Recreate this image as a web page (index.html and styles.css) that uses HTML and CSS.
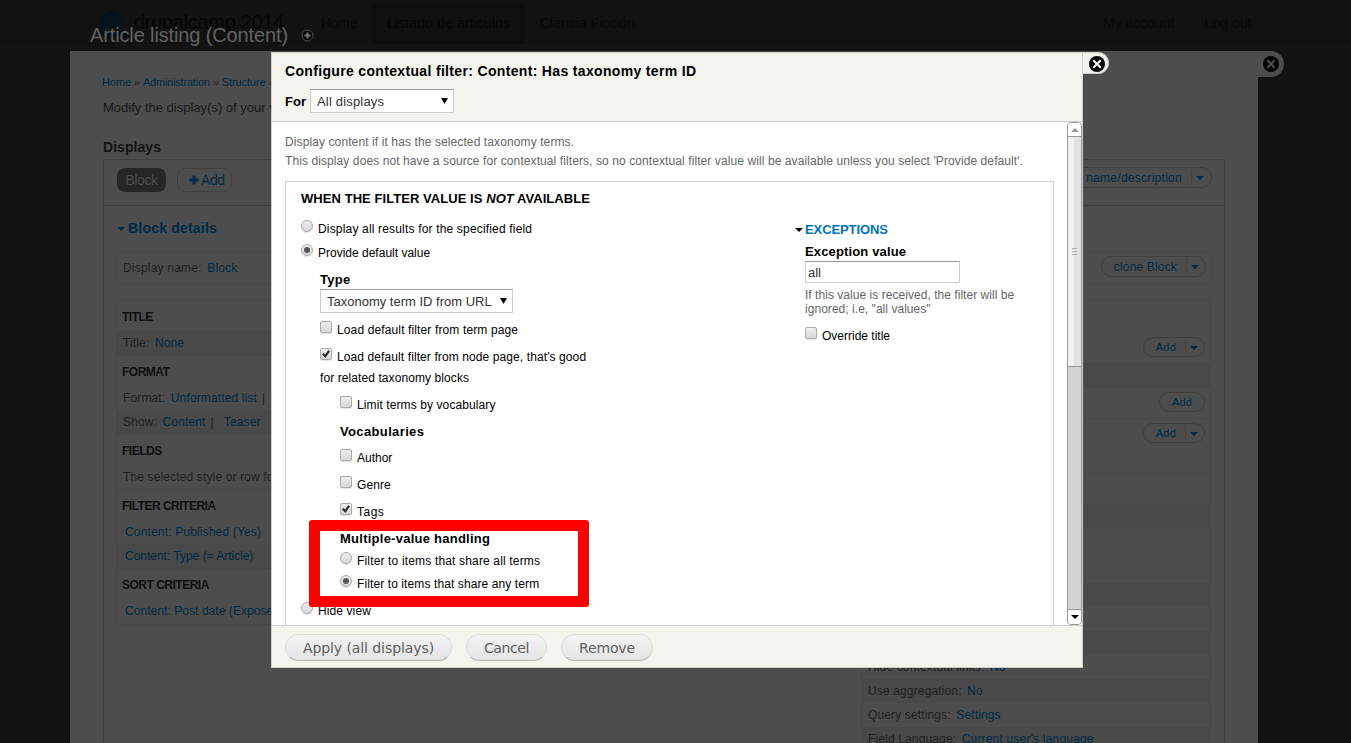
FILE: index.html
```
<!DOCTYPE html>
<html lang="en">
<head>
<meta charset="utf-8">
<title>Article listing (Content)</title>
<link rel="stylesheet" href="styles.css">
</head>
<body>
<header class="site">
  <svg class="site-logo" viewBox="0 0 26 30" width="26" height="30"><path d="M12.500 1C14 5 25.500 8 25.500 18.500C25.500 25 20 29.500 13 29.500C6 29.500.500 25 .500 18.500C.500 8 11 6 12.500 1Z" fill="#03121c"/><path d="M5 21C6 17 10 17.500 14 20C18 16 22 17 22 21C22 25 18 24 14 22C9 26 5 25 5 21Z" fill="#101518"/></svg>
  <span class="site-name">drupalcamp 2014</span>
  <nav class="site-nav">
    <a class="nav-home">Home</a>
    <a class="nav-active">Listado de articulos</a>
    <a class="nav-last">Ciencia Ficción</a>
  </nav>
  <div class="site-user"><a>My account</a><a>Log out</a></div>
</header>

<div class="overlay">
  <div class="overlay-title">
    <h1>Article listing (Content)</h1>
    <svg width="13" height="13" viewBox="0 0 13 13"><circle cx="6.500" cy="6.500" r="5.500" fill="#000" stroke="#555"/><path d="M6.500 3.500v6M3.500 6.500h6" stroke="#777" stroke-width="2"/></svg>
  </div>
  <main class="page">
    <div class="page-close"><svg width="16" height="16" viewBox="0 0 16 16"><circle cx="8" cy="8" r="8"/><path d="M4.300 4.300l7.400 7.400M11.700 4.300l-7.400 7.400" stroke="#4d4d4d" stroke-width="2"/></svg></div>
    <div class="crumbs"><a>Home</a> » <a class="crumb-admin">Administration</a> » <a>Structure</a> » <a>Views</a></div>
    <p class="intro">Modify the display(s) of your view.</p>
    <h2 class="displays-title">Displays</h2>
    <section class="panel">
      <div class="panel-tabs">
        <span class="tab tab-on">Block</span>
        <span class="tab tab-add"><svg width="10" height="10" viewBox="0 0 10 10"><path d="M5 .500v9M.500 5h9" stroke="#002b48" stroke-width="3"/></svg>Add</span>
        <span class="pill pill-name"><span>edit view name/description</span><i class="drop"></i></span>
      </div>
      <h3 class="details-title"><i class="tri"></i>Block details</h3>
      <div class="name-row">
        <p>Display name: <a>Block</a></p>
        <span class="pill pill-clone"><span>clone Block</span><i class="drop"></i></span>
      </div>
      <div class="cols">
        <div class="col">
          <h4>TITLE</h4>
          <p class="row tall odd">Title: <a>None</a></p>
          <h4>FORMAT</h4>
          <p class="row format">Format: <a>Unformatted list</a><b>|</b><a>Settings</a></p>
          <p class="row tall odd">Show: <a>Content</a><b>|</b><a class="teaser">Teaser</a></p>
          <h4>FIELDS</h4>
          <p class="row tall">The selected style or row format does not use fields.</p>
          <h4 class="ruled">FILTER CRITERIA</h4>
          <p class="row crit pub"><a>Content: Published (Yes)</a></p>
          <p class="row crit tall odd"><a>Content: Type (= Article)</a></p>
          <h4 class="ruled">SORT CRITERIA</h4>
          <p class="row crit tall post"><a>Content: Post date (Exposed)</a></p>
        </div>
        <div class="col col-right">
          <div class="slot slot-first"><span class="pill pill-add"><span>Add</span><i class="drop"></i></span></div>
          <div class="row odd"></div>
          <div class="slot"><span class="pill pill-add solo"><span>Add</span></span></div>
          <div class="slot slot-filter"><span class="pill pill-add"><span>Add</span><i class="drop"></i></span></div>
          <div class="slot"></div>
          <div class="row odd"></div>
          <div class="slot slot-other"></div>
          <div class="row odd"></div>
          <div class="row"></div>
          <div class="row odd"></div>
          <p class="row">Hide contextual links: <a>No</a></p>
          <p class="row odd aggr">Use aggregation: <a>No</a></p>
          <p class="row">Query settings: <a>Settings</a></p>
          <p class="row odd lang">Field Language: <a>Current user's language</a></p>
        </div>
      </div>
    </section>
  </main>
</div>

<div class="modal">
  <div class="modal-close"><svg width="16" height="16" viewBox="0 0 16 16"><circle cx="8" cy="8" r="8"/><path d="M4.300 4.300l7.400 7.400M11.700 4.300l-7.400 7.400" stroke="#fff" stroke-width="2"/></svg></div>
  <div class="modal-head">
    <h2>Configure contextual filter: Content: Has taxonomy term ID</h2>
    <div class="for"><strong>For</strong><span class="select select-for">All displays<i class="arrow"></i></span></div>
  </div>
  <div class="modal-body">
    <div class="scroll">
      <p class="help">Display content if it has the selected taxonomy terms.</p>
      <p class="help help-2">This display does not have a source for contextual filters, so no contextual filter value will be available unless you select 'Provide default'.</p>
      <section class="fieldset">
        <h3>WHEN THE FILTER VALUE IS <em>NOT</em> AVAILABLE</h3>
        <div class="fs-cols">
          <div class="opts">
            <label class="opt wide"><i class="radio"></i>Display all results for the specified field</label>
            <label class="opt plain"><i class="radio on"></i>Provide default value</label>
            <div class="sub">
              <h4>Type</h4>
              <span class="select select-type">Taxonomy term ID from URL<i class="arrow"></i></span>
              <label class="opt term"><i class="check"></i>Load default filter from term page</label>
              <label class="opt two"><i class="check on"></i>Load default filter from node page, that's good</label>
              <div class="cont">for related taxonomy blocks</div>
              <div class="sub2">
                <label class="opt first"><i class="check"></i>Limit terms by vocabulary</label>
                <h4 class="voc">Vocabularies</h4>
                <label class="opt plain"><i class="check"></i>Author</label>
                <label class="opt gap"><i class="check"></i>Genre</label>
                <label class="opt gap tags"><i class="check on"></i>Tags</label>
                <h4 class="multi">Multiple-value handling</h4>
                <label class="opt near all"><i class="radio"></i>Filter to items that share all terms</label>
                <label class="opt near"><i class="radio on"></i>Filter to items that share any term</label>
              </div>
            </div>
            <label class="opt hide-view"><i class="radio"></i>Hide view</label>
          </div>
          <div class="exceptions">
            <h3><i class="tri"></i>EXCEPTIONS</h3>
            <h4>Exception value</h4>
            <div class="input">all</div>
            <p>If this value is received, the filter will be<br>ignored; i.e, "all values"</p>
            <label class="opt plain"><i class="check"></i>Override title</label>
          </div>
        </div>
      </section>
    </div>
    <div class="bar">
      <div class="bar-btn up"><i></i></div>
      <div class="thumb"><i></i><i></i><i></i></div>
      <div class="track"></div>
      <div class="bar-btn down"><i></i></div>
    </div>
  </div>
  <div class="modal-foot">
    <span class="btn apply">Apply (all displays)</span>
    <span class="btn cancel">Cancel</span>
    <span class="btn remove">Remove</span>
  </div>
  <div class="highlight"></div>
</div>
</body>
</html>
```
FILE: styles.css
```
* { box-sizing: border-box; }
body {
  margin: 0;
  height: 743px;
  overflow: hidden;
  position: relative;
  background: #131313;
  font: 12px/24px "Liberation Sans", Arial, sans-serif;
  color: #1f1f1f;
}
h1, h2, h3, h4, p { margin: 0; font-size: inherit; font-weight: bold; }
p { font-weight: normal; }
a { color: #002a46; }
i { font-style: normal; display: block; flex: none; }

/* Site header behind the overlay */
.site {
  height: 44px;
  display: flex;
  padding-left: 98px;
  color: #070707;
  background: #121212;
  border-bottom: 1px solid #0f0f0f;
  font-size: 14px;
  line-height: 46px;
}
.site a { color: #090909; }
.site-logo { margin-top: 8px; flex: none; }
.site-name { width: 197px; margin-left: 10px; font-size: 20px; line-height: 45px; letter-spacing: -.3px; color: #060606; flex: none; }
.site-nav { display: flex; width: 772px; flex: none; }
.nav-home { width: 51px; margin-left: -10px; letter-spacing: -.3px; }
.site-nav .nav-active { width: 153px; margin-top: 3px; padding-left: 15px; background: #0f0f0f; color: #050505; line-height: 40px; letter-spacing: .12px; }
.nav-last { margin-left: 15px; }
.site-user { display: flex; gap: 30px; }

/* Administrative overlay */
.overlay { position: absolute; inset: 0; padding-left: 70px; }
.overlay-title { height: 51px; padding: 23px 0 0 20px; display: flex; gap: 14px; }
.overlay-title h1 { font-size: 20px; font-weight: normal; line-height: 24px; letter-spacing: -.13px; color: #626262; }
.overlay-title svg { margin-top: 6px; margin-left: -1px; }
.page { position: relative; width: 1188px; height: 692px; padding: 21px 33px 0; background: #4d4d4d; }
.page-close { position: absolute; left: 1188px; top: 0; width: 26px; height: 26px; background: #4d4d4d; border-radius: 0 13px 13px 0; }
.page-close svg { position: absolute; left: 5px; top: 5px; }
.crumbs { height: 21px; line-height: 21px; font-size: 11px; letter-spacing: -.1px; margin-left: -1px; }
.crumb-admin { letter-spacing: -.2px; }
.intro { height: 30px; line-height: 30px; font-size: 13px; color: #181818; }
.displays-title { height: 36px; line-height: 48px; font-size: 14px; letter-spacing: .05px; color: #131313; }
.panel { height: 600px; border: 1px solid #3f3f3f; border-bottom: 0; }
.panel-tabs { height: 46px; display: flex; align-items: flex-start; border-bottom: 1px solid #3f3f3f; padding: 8px 12px 0 13px; }
.tab { height: 24px; line-height: 22px; font-size: 14px; border-radius: 8px; letter-spacing: -.4px; }
.tab-on { width: 49px; background: #262626; color: #4d4d4d; text-align: center; line-height: 24px; }
.tab-add { width: 55px; margin-left: 11px; display: flex; align-items: center; padding-left: 11px; gap: 2px; border: 1px solid #3f3f3f; color: #002a46; }
.pill { display: flex; height: 21px; border: 1px solid #3f3f3f; border-radius: 11px; color: #002a46; line-height: 20px; white-space: nowrap; }
.pill > span { flex: 1; text-align: right; }
.drop { width: 19px; height: 15px; margin: 2px 0 0 9px; border-left: 1px solid #434343; }
.drop::after, .tri::after { content: ""; display: block; width: 0; height: 0; border: 4px solid transparent; border-top-color: #002a46; border-bottom: 0; }
.drop::after { margin: 6px 0 0 4px; }
.pill-name { width: 180px; margin: -1px 0 0 auto; letter-spacing: .28px; }
.pill-name .drop { width: 20px; }
.details-title { height: 45px; line-height: 45px; display: flex; padding-left: 13px; font-size: 14px; letter-spacing: .2px; color: #002a46; }
.tri { width: 11px; padding-top: 21px; }
.details-title .tri::after { border-width: 4.500px; border-bottom: 0; }
.name-row { height: 34px; margin: 0 12px; border: 1px solid #484848; display: flex; justify-content: space-between; padding: 4px 5px 0 6px; letter-spacing: .2px; }
.name-row a { margin-left: 2px; }
.pill-clone { width: 105px; height: 21px; letter-spacing: .16px; }
.cols { display: grid; grid-template-columns: 240px 350px; justify-content: space-between; align-items: start; margin: 15px 13px 0 12px; }
.col { border: 1px solid #484848; color: #1f1f1f; letter-spacing: .14px; white-space: nowrap; overflow: hidden; }
.col h4 { height: 30px; line-height: 32px; padding-left: 5px; color: #0e0e0e; letter-spacing: -.5px; }
.col .ruled { box-shadow: 0 -1px #484848; }
.row { height: 24px; padding-left: 6px; }
.tall { height: 25px; }
.odd { background: #494949; }
.row a { margin-left: 2px; }
.row b { font-weight: normal; margin: 0 4px 0 5px; }
.row.crit { padding-left: 8px; letter-spacing: -.02px; }
.row.crit a { margin-left: 0; }
.row.pub { letter-spacing: .16px; }
.row.post { letter-spacing: .06px; }
.row .teaser { margin-left: 6px; }
.col-right { height: 445px; }
.slot { height: 31px; padding: 4px 5px 0 0; display: flex; justify-content: flex-end; border-top: 1px solid #484848; }
.slot-first { height: 62px; padding-top: 36px; border-top: 0; }
.slot-filter { height: 55px; }
.slot-other { height: 55px; border-top: 0; }
.pill-add { width: 62px; height: 20px; font-size: 11px; line-height: 19px; letter-spacing: .2px; }
.pill-add.solo { width: 46px; }
.pill-add.solo span { text-align: center; }
.pill-add .drop { height: 14px; }
.row.lang a { letter-spacing: .19px; }

/* Settings dialog */
.modal { position: absolute; left: 271px; top: 52px; width: 812px; height: 616px; border: 1px solid #ccc; background: #fff; color: #000; }
.modal-close { position: absolute; left: 811px; top: -1px; width: 26px; height: 22px; background: #f3f4ee; border-radius: 0 11px 11px 0; border: 1px solid #ccc; border-left: 0; }
.modal-close svg { position: absolute; left: 6px; top: 3px; }
.modal-head { height: 69px; padding: 5px 13px 0; background: #f3f4ee; border-bottom: 1px solid #ccc; }
.modal-head h2 { height: 31px; line-height: 26px; font-size: 14px; letter-spacing: .333px; }
.for { display: flex; font-size: 13px; line-height: 24px; }
.for strong { width: 25px; line-height: 25px; }
.select { position: relative; display: block; height: 24px; padding-left: 6px; line-height: 23px; font-size: 13px; color: #333; background: #fff; border: 1px solid #ccc; border-top-color: #999; }
.select-for { width: 144px; letter-spacing: .18px; }
.arrow { position: absolute; right: 5px; top: 8px; border: 3.500px solid transparent; border-top: 6px solid #000; border-bottom: 0; border-left-width: 3px; width: 7px; }
.arrow { border: 0; height: 6px; background: #000; clip-path: polygon(0 0, 100% 0, 50% 100%); }
.modal-body { display: flex; height: 503px; overflow: hidden; }
.scroll { width: 795px; padding: 10px 13px 0; }
.help { height: 19px; line-height: 20px; color: #666; letter-spacing: .105px; white-space: nowrap; }
.help-2 { height: 30px; letter-spacing: .091px; }
.fieldset { width: 769px; height: 460px; border: 1px solid #ccc; padding-left: 15px; }
.fieldset > h3 { height: 35px; line-height: 33px; font-size: 13px; letter-spacing: .06px; }
.fs-cols { display: grid; grid-template-columns: 504px 249px; }
.opt { display: flex; height: 24px; letter-spacing: .1px; white-space: nowrap; }
.opt.wide { letter-spacing: .172px; }
.opt.plain { letter-spacing: 0; }
.opt.all { letter-spacing: .16px; }
.radio, .check { width: 12px; height: 12px; margin: 3px 5px 0 0; border: 1px solid #aaa; border-radius: 2px; background: linear-gradient(#eee, #d8d8d8); box-shadow: 0 1px 1px #e3e3e3; position: relative; }
.radio { border-radius: 50%; }
.radio.on::after { content: ""; position: absolute; left: 2px; top: 2px; width: 6px; height: 6px; border-radius: 50%; background: #555; }
.check.on::after { content: ""; position: absolute; left: 1px; top: 1px; width: 8px; height: 8px; background: #333; clip-path: polygon(0 55%, 20% 35%, 38% 55%, 78% 0, 100% 18%, 42% 100%); }
.sub { padding-left: 19px; }
.sub2 { padding-left: 20px; }
.opts h4, .exceptions h4 { font-size: 13px; height: 24px; line-height: 29px; letter-spacing: .25px; }
.select-type { width: 193px; margin-bottom: 5px; }
.opt.term { letter-spacing: .128px; }
.opt.two { height: 21px; margin-top: 3px; }
.cont { height: 24px; letter-spacing: .087px; }
.opt.first, .opt.gap { margin-top: 3px; }
.opt.tags { letter-spacing: .5px; }
.opts .voc { height: 29px; letter-spacing: .36px; }
.opts .multi { height: 25px; }
.opt.near { height: 23px; }
.opt.hide-view { margin-top: 4px; }
.exceptions h3 { height: 23px; line-height: 25px; font-size: 13px; letter-spacing: -.1px; color: #0074bd; display: flex; margin-left: -11px; }
.exceptions .tri { padding: 11px 0 0 1px; }
.exceptions .tri::after { border-top-color: #000; }
.exceptions h4 { height: 21px; line-height: 23px; letter-spacing: .144px; }
.input { width: 155px; height: 22px; padding-left: 2px; border: 1px solid #ccc; border-top-color: #999; font-size: 13px; line-height: 21px; color: #333; }
.exceptions p { margin: 5px 0 8px; height: 28px; line-height: 14px; color: #666; letter-spacing: .04px; }

/* Scroll bar of the dialog */
.bar { width: 15px; background: #d3d3d3; border: 1px solid #999; border-radius: 4px; overflow: hidden; display: flex; flex-direction: column; }
.bar-btn { height: 13px; background: #fff; display: flex; justify-content: center; align-items: flex-start; padding-top: 5px; }
.bar-btn i { width: 0; height: 0; border: 4px solid transparent; }
.bar-btn.up i { border-top: 0; border-bottom-color: #999; }
.bar-btn.down i { border-bottom: 0; border-top-color: #000; }
.down { border-top: 1px solid #999; height: 15px; }
.thumb { height: 231px; border: solid #999; border-width: 1px 0; background: linear-gradient(90deg, #f0f0f0 50%, #e2e2e2 50%); display: flex; flex-direction: column; justify-content: center; align-items: center; gap: 2px; }
.thumb i { width: 5px; height: 1px; background: #aaa; }
.track { flex: 1; }

.modal-foot { height: 42px; padding: 8px 13px 0; display: flex; background: #f3f4ee; border-top: 1px solid #ccc; }
.btn { height: 27px; border: 1px solid #ddd; border-bottom-color: #b4b4b4; border-radius: 14px; background: linear-gradient(#f3f3f3, #e4e4e4); text-align: center; font: 14px/27px "DejaVu Sans", sans-serif; color: #5e5e5e; }
.apply { width: 167px; letter-spacing: -.08px; }
.cancel { width: 81px; margin-left: 14px; letter-spacing: -.4px; }
.remove { width: 92px; margin-left: 14px; letter-spacing: -.15px; }

/* Callout drawn over the dialog */
.highlight { position: absolute; left: 37px; top: 467px; width: 280px; height: 87px; border: 11px solid #f00; border-radius: 3px; }
```
